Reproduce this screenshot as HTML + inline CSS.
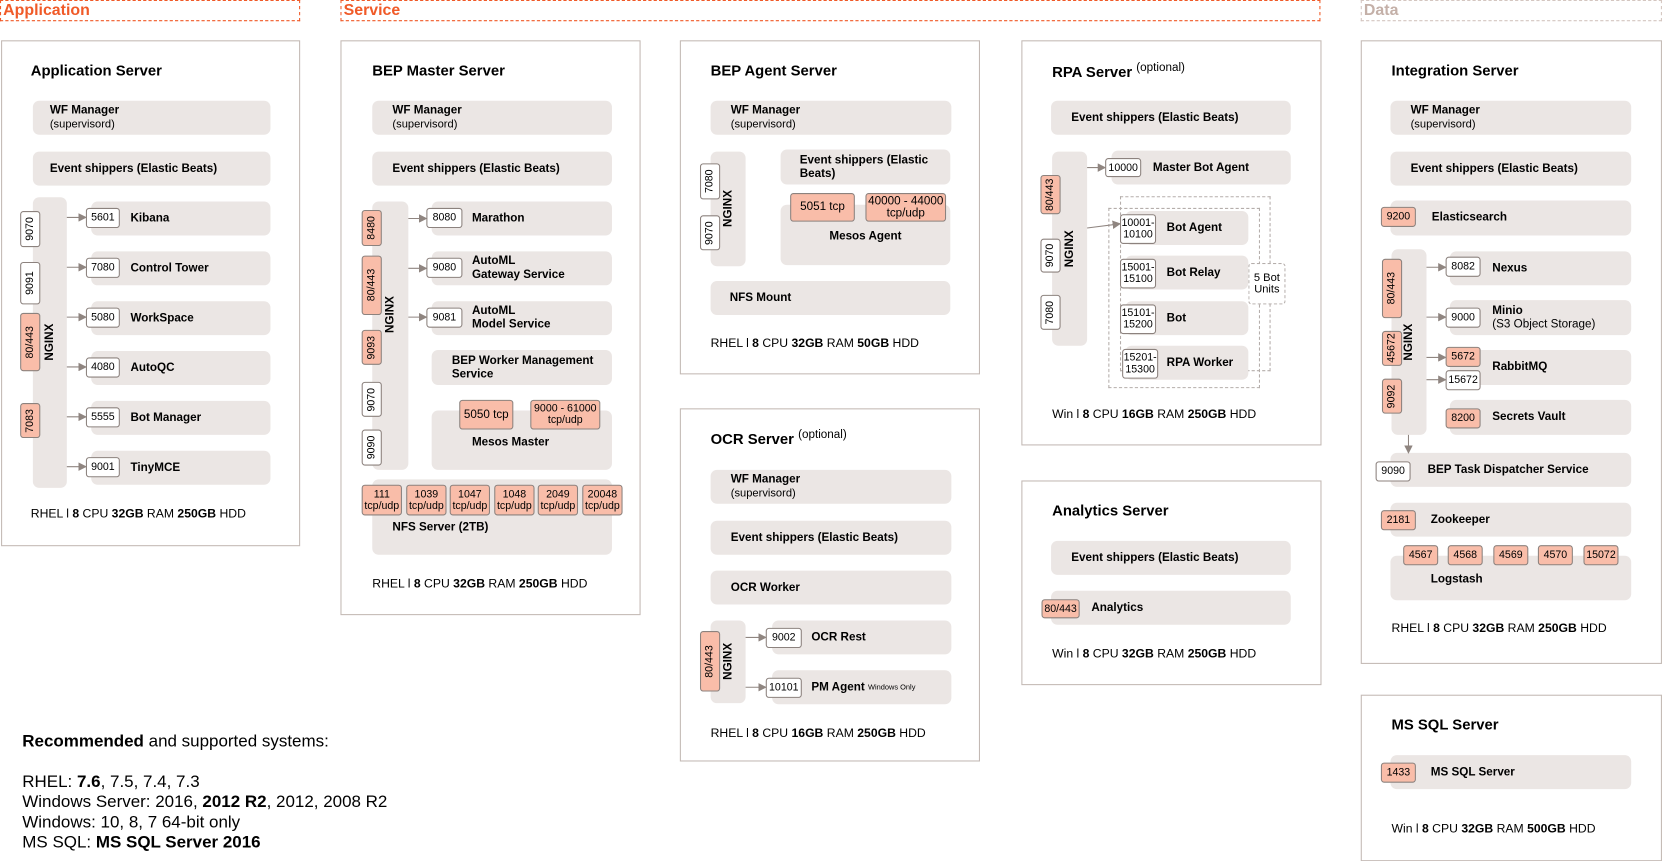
<!DOCTYPE html>
<html><head><meta charset="utf-8">
<style>
html,body{margin:0;padding:0;background:#fff;width:1662px;height:861px;overflow:hidden}
#c{position:absolute;left:0;top:0;width:1567px;height:812px;transform:scale(1.0606);transform-origin:0 0;font-family:"Liberation Sans",Arial,sans-serif;color:#000}
.a{position:absolute;box-sizing:border-box}
.box{border:1px solid #c3b9b4;background:#fff}
.b{background:#ebe6e4;border-radius:6px;font-weight:bold;font-size:11px;line-height:13px;display:flex;align-items:center}
.b span{font-weight:normal;font-size:10.5px}
.p{background:#fff;border:1px solid #8c827e;border-radius:3px;font-size:10px;line-height:11px;display:flex;align-items:center;justify-content:center;text-align:center;white-space:nowrap}
.s{background:#f9bda9}
.v{writing-mode:vertical-rl;transform:rotate(180deg)}
.ng{font-weight:bold;font-size:11px;display:flex;align-items:center;justify-content:center}
.ti{font-weight:bold;font-size:14px;white-space:nowrap}
.ti sup{font-weight:normal;font-size:11px}
.ft{font-size:11.5px;white-space:nowrap}
.hd{border:1px dashed #f05a28;color:#f05a28;font-weight:bold;font-size:15px;line-height:18px;padding-left:2px}
.dash{border:1px dashed #b5aeab}
</style></head><body><div id="c">

<div class="a hd" style="left:0;top:0;width:283px;height:20px">Application</div>
<div class="a hd" style="left:321px;top:0;width:924px;height:20px">Service</div>
<div class="a hd" style="left:1283px;top:0;width:284px;height:20px;border-color:#d4c6c0;color:#c4b0a8">Data</div>

<div class="a box" style="left:1px;top:38px;width:282px;height:477px"></div>
<div class="a ti" style="left:29px;top:58px">Application Server</div>
<div class="a b" style="left:31px;top:95px;width:224px;height:32px;padding-left:16px"><div>WF Manager<br><span>(supervisord)</span></div></div>
<div class="a b" style="left:31px;top:143px;width:224px;height:32px;padding-left:16px">Event shippers (Elastic Beats)</div>
<div class="a b" style="left:31px;top:186px;width:32px;height:274px"></div>
<div class="a ng v" style="left:31px;top:186px;width:32px;height:274px">NGINX</div>
<div class="a b" style="left:86px;top:190px;width:169px;height:32px;padding-left:37px">Kibana</div>
<div class="a b" style="left:86px;top:237px;width:169px;height:32px;padding-left:37px">Control Tower</div>
<div class="a b" style="left:86px;top:284px;width:169px;height:32px;padding-left:37px">WorkSpace</div>
<div class="a b" style="left:86px;top:331px;width:169px;height:32px;padding-left:37px">AutoQC</div>
<div class="a b" style="left:86px;top:378px;width:169px;height:32px;padding-left:37px">Bot Manager</div>
<div class="a b" style="left:86px;top:425px;width:169px;height:32px;padding-left:37px">TinyMCE</div>
<div class="a p" style="left:81px;top:196px;width:32px;height:19px">5601</div>
<div class="a p" style="left:81px;top:243px;width:32px;height:19px">7080</div>
<div class="a p" style="left:81px;top:290px;width:32px;height:19px">5080</div>
<div class="a p" style="left:81px;top:337px;width:32px;height:19px">4080</div>
<div class="a p" style="left:81px;top:384px;width:32px;height:19px">5555</div>
<div class="a p" style="left:81px;top:431px;width:32px;height:19px">9001</div>
<div class="a p v" style="left:19px;top:199px;width:19px;height:34px">9070</div>
<div class="a p v" style="left:19px;top:247px;width:19px;height:40px">9091</div>
<div class="a p v s" style="left:19px;top:295px;width:19px;height:55px">80/443</div>
<div class="a p v s" style="left:19px;top:380px;width:19px;height:33px">7083</div>
<div class="a ft" style="left:29px;top:479px">RHEL l <b>8</b> CPU <b>32GB</b> RAM <b>250GB</b> HDD</div>

<div class="a box" style="left:321px;top:38px;width:283px;height:542px"></div>
<div class="a ti" style="left:351px;top:58px">BEP Master Server</div>
<div class="a b" style="left:351px;top:95px;width:226px;height:32px;padding-left:19px"><div>WF Manager<br><span>(supervisord)</span></div></div>
<div class="a b" style="left:351px;top:143px;width:226px;height:32px;padding-left:19px">Event shippers (Elastic Beats)</div>
<div class="a b" style="left:351px;top:190px;width:34px;height:253px"></div>
<div class="a ng v" style="left:351px;top:190px;width:34px;height:253px;padding-top:40px;box-sizing:border-box">NGINX</div>
<div class="a b" style="left:407px;top:190px;width:170px;height:32px;padding-left:38px">Marathon</div>
<div class="a b" style="left:407px;top:237px;width:170px;height:32px;padding-left:38px">AutoML<br>Gateway Service</div>
<div class="a b" style="left:407px;top:284px;width:170px;height:32px;padding-left:38px">AutoML<br>Model Service</div>
<div class="a b" style="left:407px;top:330px;width:170px;height:33px;padding-left:19px">BEP Worker Management<br>Service</div>
<div class="a b" style="left:407px;top:387px;width:170px;height:56px;padding-left:38px;padding-top:4px">Mesos Master</div>
<div class="a p s" style="left:433px;top:377px;width:51px;height:28px;font-size:11px">5050 tcp</div>
<div class="a p s" style="left:500px;top:377px;width:66px;height:28px;font-size:10px">9000 - 61000<br>tcp/udp</div>
<div class="a p" style="left:402px;top:196px;width:34px;height:19px">8080</div>
<div class="a p" style="left:402px;top:243px;width:34px;height:19px">9080</div>
<div class="a p" style="left:402px;top:290px;width:34px;height:19px">9081</div>
<div class="a p v s" style="left:341px;top:198px;width:19px;height:34px">8480</div>
<div class="a p v s" style="left:341px;top:241px;width:19px;height:56px">80/443</div>
<div class="a p v s" style="left:341px;top:311px;width:19px;height:33px">9093</div>
<div class="a p v" style="left:341px;top:360px;width:19px;height:33px">9070</div>
<div class="a p v" style="left:341px;top:405px;width:19px;height:34px">9090</div>
<div class="a b" style="left:351px;top:452px;width:226px;height:71px;padding-left:19px;padding-top:20px">NFS Server (2TB)</div>
<div class="a p s" style="left:341px;top:457px;width:38px;height:29px">111<br>tcp/udp</div>
<div class="a p s" style="left:383px;top:457px;width:38px;height:29px">1039<br>tcp/udp</div>
<div class="a p s" style="left:424px;top:457px;width:38px;height:29px">1047<br>tcp/udp</div>
<div class="a p s" style="left:466px;top:457px;width:38px;height:29px">1048<br>tcp/udp</div>
<div class="a p s" style="left:507px;top:457px;width:38px;height:29px">2049<br>tcp/udp</div>
<div class="a p s" style="left:549px;top:457px;width:38px;height:29px">20048<br>tcp/udp</div>
<div class="a ft" style="left:351px;top:545px">RHEL l <b>8</b> CPU <b>32GB</b> RAM <b>250GB</b> HDD</div>

<div class="a box" style="left:641px;top:38px;width:283px;height:315px"></div>
<div class="a ti" style="left:670px;top:58px">BEP Agent Server</div>
<div class="a b" style="left:670px;top:95px;width:227px;height:32px;padding-left:19px"><div>WF Manager<br><span>(supervisord)</span></div></div>
<div class="a b" style="left:670px;top:143px;width:33px;height:108px"></div>
<div class="a ng v" style="left:670px;top:143px;width:33px;height:108px">NGINX</div>
<div class="a b" style="left:736px;top:141px;width:160px;height:33px;padding-left:18px">Event shippers (Elastic<br>Beats)</div>
<div class="a b" style="left:736px;top:193px;width:160px;height:57px;justify-content:center;padding-top:4px">Mesos Agent</div>
<div class="a p s" style="left:745px;top:182px;width:61px;height:27px;font-size:11px">5051 tcp</div>
<div class="a p s" style="left:816px;top:182px;width:76px;height:27px;font-size:11px">40000 - 44000<br>tcp/udp</div>
<div class="a p v" style="left:660px;top:154px;width:19px;height:34px">7080</div>
<div class="a p v" style="left:660px;top:203px;width:19px;height:33px">9070</div>
<div class="a b" style="left:670px;top:265px;width:226px;height:32px;padding-left:18px">NFS Mount</div>
<div class="a ft" style="left:670px;top:318px">RHEL l <b>8</b> CPU <b>32GB</b> RAM <b>50GB</b> HDD</div>

<div class="a box" style="left:641px;top:385px;width:283px;height:333px"></div>
<div class="a ti" style="left:670px;top:404px">OCR Server <sup>(optional)</sup></div>
<div class="a b" style="left:670px;top:443px;width:227px;height:32px;padding-left:19px"><div>WF Manager<br><span>(supervisord)</span></div></div>
<div class="a b" style="left:670px;top:491px;width:227px;height:32px;padding-left:19px">Event shippers (Elastic Beats)</div>
<div class="a b" style="left:670px;top:538px;width:227px;height:32px;padding-left:19px">OCR Worker</div>
<div class="a b" style="left:670px;top:585px;width:33px;height:78px"></div>
<div class="a ng v" style="left:670px;top:585px;width:33px;height:78px">NGINX</div>
<div class="a b" style="left:728px;top:585px;width:169px;height:32px;padding-left:37px">OCR Rest</div>
<div class="a b" style="left:728px;top:632px;width:169px;height:32px;padding-left:37px">PM Agent&nbsp;<span style="font-size:7px">Windows Only</span></div>
<div class="a p" style="left:722px;top:592px;width:34px;height:19px">9002</div>
<div class="a p" style="left:722px;top:639px;width:34px;height:19px">10101</div>
<div class="a p v s" style="left:660px;top:595px;width:19px;height:57px">80/443</div>
<div class="a ft" style="left:670px;top:686px">RHEL l <b>8</b> CPU <b>16GB</b> RAM <b>250GB</b> HDD</div>

<div class="a box" style="left:963px;top:38px;width:283px;height:382px"></div>
<div class="a ti" style="left:992px;top:58px">RPA Server <sup>(optional)</sup></div>
<div class="a b" style="left:991px;top:95px;width:226px;height:32px;padding-left:19px">Event shippers (Elastic Beats)</div>
<div class="a b" style="left:992px;top:143px;width:33px;height:183px"></div>
<div class="a ng v" style="left:992px;top:143px;width:33px;height:183px">NGINX</div>
<div class="a b" style="left:1048px;top:142px;width:169px;height:32px;padding-left:39px">Master Bot Agent</div>
<div class="a p" style="left:1042px;top:149px;width:34px;height:18px">10000</div>
<div class="a dash" style="left:1056px;top:185px;width:142px;height:165px"></div>
<div class="a dash" style="left:1045px;top:196px;width:143px;height:170px"></div>
<div class="a b" style="left:1061px;top:199px;width:116px;height:32px;padding-left:39px">Bot Agent</div>
<div class="a b" style="left:1061px;top:241px;width:116px;height:32px;padding-left:39px">Bot Relay</div>
<div class="a b" style="left:1061px;top:284px;width:116px;height:32px;padding-left:39px">Bot</div>
<div class="a b" style="left:1061px;top:326px;width:116px;height:32px;padding-left:39px">RPA Worker</div>
<div class="a p" style="left:1056px;top:202px;width:34px;height:28px">10001-<br>10100</div>
<div class="a p" style="left:1056px;top:244px;width:34px;height:28px">15001-<br>15100</div>
<div class="a p" style="left:1056px;top:287px;width:34px;height:28px">15101-<br>15200</div>
<div class="a p" style="left:1058px;top:329px;width:34px;height:28px">15201-<br>15300</div>
<div class="a p" style="left:1177px;top:248px;width:35px;height:39px;border:1px dashed #b5aeab;font-size:10.5px">5 Bot<br>Units</div>
<div class="a p v s" style="left:981px;top:165px;width:19px;height:37px">80/443</div>
<div class="a p v" style="left:981px;top:225px;width:19px;height:32px">9070</div>
<div class="a p v" style="left:981px;top:278px;width:19px;height:33px">7080</div>
<div class="a ft" style="left:992px;top:385px">Win l <b>8</b> CPU <b>16GB</b> RAM <b>250GB</b> HDD</div>

<div class="a box" style="left:963px;top:453px;width:283px;height:193px"></div>
<div class="a ti" style="left:992px;top:473px">Analytics Server</div>
<div class="a b" style="left:991px;top:510px;width:226px;height:32px;padding-left:19px">Event shippers (Elastic Beats)</div>
<div class="a b" style="left:991px;top:557px;width:226px;height:32px;padding-left:38px">Analytics</div>
<div class="a p s" style="left:982px;top:565px;width:36px;height:18px">80/443</div>
<div class="a ft" style="left:992px;top:611px">Win l <b>8</b> CPU <b>32GB</b> RAM <b>250GB</b> HDD</div>

<div class="a box" style="left:1283px;top:38px;width:284px;height:588px"></div>
<div class="a ti" style="left:1312px;top:58px">Integration Server</div>
<div class="a b" style="left:1311px;top:95px;width:227px;height:32px;padding-left:19px"><div>WF Manager<br><span>(supervisord)</span></div></div>
<div class="a b" style="left:1311px;top:143px;width:227px;height:32px;padding-left:19px">Event shippers (Elastic Beats)</div>
<div class="a b" style="left:1311px;top:189px;width:227px;height:33px;padding-left:39px">Elasticsearch</div>
<div class="a p s" style="left:1302px;top:195px;width:33px;height:19px">9200</div>
<div class="a b" style="left:1312px;top:235px;width:33px;height:175px"></div>
<div class="a ng v" style="left:1312px;top:235px;width:33px;height:175px">NGINX</div>
<div class="a b" style="left:1367px;top:237px;width:171px;height:32px;padding-left:40px">Nexus</div>
<div class="a b" style="left:1367px;top:283px;width:171px;height:33px;padding-left:40px"><div>Minio<br><span style="font-size:11px">(S3 Object Storage)</span></div></div>
<div class="a b" style="left:1367px;top:330px;width:171px;height:33px;padding-left:40px">RabbitMQ</div>
<div class="a b" style="left:1367px;top:377px;width:171px;height:33px;padding-left:40px">Secrets Vault</div>
<div class="a p" style="left:1363px;top:242px;width:33px;height:19px">8082</div>
<div class="a p" style="left:1363px;top:290px;width:33px;height:19px">9000</div>
<div class="a p s" style="left:1363px;top:327px;width:33px;height:19px">5672</div>
<div class="a p" style="left:1363px;top:349px;width:33px;height:19px">15672</div>
<div class="a p s" style="left:1363px;top:385px;width:33px;height:19px">8200</div>
<div class="a p v s" style="left:1303px;top:244px;width:19px;height:56px">80/443</div>
<div class="a p v s" style="left:1303px;top:312px;width:19px;height:33px">45672</div>
<div class="a p v s" style="left:1303px;top:357px;width:19px;height:33px">9092</div>
<div class="a b" style="left:1311px;top:427px;width:227px;height:32px;padding-left:35px">BEP Task Dispatcher Service</div>
<div class="a p" style="left:1297px;top:435px;width:33px;height:19px">9090</div>
<div class="a b" style="left:1311px;top:474px;width:227px;height:32px;padding-left:38px">Zookeeper</div>
<div class="a p s" style="left:1302px;top:481px;width:33px;height:19px">2181</div>
<div class="a b" style="left:1311px;top:524px;width:227px;height:42px;padding-left:38px;padding-top:2px">Logstash</div>
<div class="a p s" style="left:1323px;top:514px;width:33px;height:19px">4567</div>
<div class="a p s" style="left:1365px;top:514px;width:33px;height:19px">4568</div>
<div class="a p s" style="left:1408px;top:514px;width:33px;height:19px">4569</div>
<div class="a p s" style="left:1450px;top:514px;width:33px;height:19px">4570</div>
<div class="a p s" style="left:1493px;top:514px;width:33px;height:19px">15072</div>
<div class="a ft" style="left:1312px;top:587px">RHEL l <b>8</b> CPU <b>32GB</b> RAM <b>250GB</b> HDD</div>

<div class="a box" style="left:1283px;top:655px;width:284px;height:157px"></div>
<div class="a ti" style="left:1312px;top:675px">MS SQL Server</div>
<div class="a b" style="left:1311px;top:712px;width:227px;height:32px;padding-left:38px">MS SQL Server</div>
<div class="a p s" style="left:1302px;top:719px;width:33px;height:19px">1433</div>
<div class="a ft" style="left:1312px;top:776px">Win l <b>8</b> CPU <b>32GB</b> RAM <b>500GB</b> HDD</div>

<div class="a" style="left:21px;top:690px;font-size:16px;line-height:19px;white-space:nowrap"><b>Recommended</b> and supported systems:<br><br>RHEL: <b>7.6</b>, 7.5, 7.4, 7.3<br>Windows Server: 2016, <b>2012 R2</b>, 2012, 2008 R2<br>Windows: 10, 8, 7 64-bit only<br>MS SQL: <b>MS SQL Server 2016</b></div>

<svg class="a" style="left:0;top:0" width="1567" height="812">
<defs><marker id="m" markerWidth="8" markerHeight="8" refX="7" refY="4" orient="auto" markerUnits="userSpaceOnUse"><path d="M0,0 L8,4 L0,8 z" fill="#8f8580"/></marker></defs>
<g stroke="#8f8580" stroke-width="1" fill="none" marker-end="url(#m)">
<line x1="63" y1="205" x2="81" y2="205"/><line x1="63" y1="252" x2="81" y2="252"/><line x1="63" y1="299" x2="81" y2="299"/>
<line x1="63" y1="346" x2="81" y2="346"/><line x1="63" y1="393" x2="81" y2="393"/><line x1="63" y1="440" x2="81" y2="440"/>
<line x1="385" y1="206" x2="402" y2="206"/><line x1="385" y1="253" x2="402" y2="253"/><line x1="385" y1="299" x2="402" y2="299"/>
<line x1="703" y1="601" x2="722" y2="601"/><line x1="703" y1="648" x2="722" y2="648"/>
<line x1="1025" y1="158" x2="1042" y2="158"/><line x1="1025" y1="215" x2="1056" y2="211"/>
<line x1="1345" y1="252" x2="1363" y2="252"/><line x1="1345" y1="299" x2="1363" y2="299"/>
<line x1="1345" y1="337" x2="1363" y2="337"/><line x1="1345" y1="358" x2="1363" y2="358"/>
<line x1="1328" y1="410" x2="1328" y2="427"/>
</g></svg>
</div></body></html>
